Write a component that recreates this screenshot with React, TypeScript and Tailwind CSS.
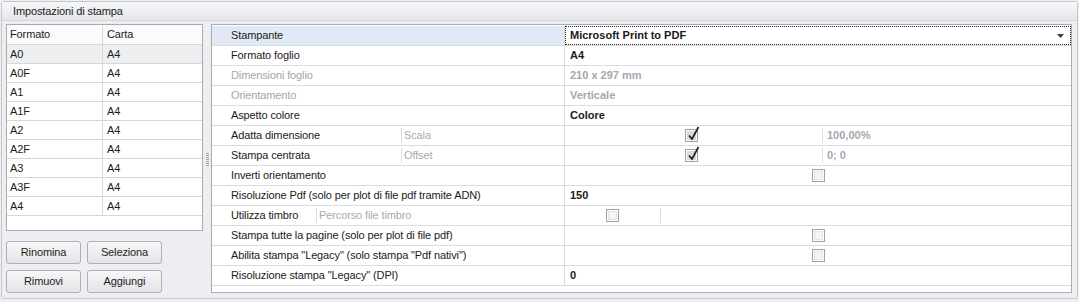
import React from 'react';

type Row = {
  label: string;
  dim?: boolean;
  sub?: string;
  subW?: number;
  value?: string;
  valueDim?: boolean;
  check?: 'none' | 'on' | 'off';
  checkMode?: 'full' | 'half' | 'small';
  extra?: string;
  selected?: boolean;
  combo?: boolean;
};

const rows: Row[] = [
  { label: 'Stampante', value: 'Microsoft Print to PDF', selected: true, combo: true },
  { label: 'Formato foglio', value: 'A4' },
  { label: 'Dimensioni foglio', dim: true, value: '210 x 297 mm', valueDim: true },
  { label: 'Orientamento', dim: true, value: 'Verticale', valueDim: true },
  { label: 'Aspetto colore', value: 'Colore' },
  { label: 'Adatta dimensione', sub: 'Scala', subW: 167, check: 'on', checkMode: 'half', extra: '100,00%' },
  { label: 'Stampa centrata', sub: 'Offset', subW: 167, check: 'on', checkMode: 'half', extra: '0; 0' },
  { label: 'Inverti orientamento', check: 'off', checkMode: 'full' },
  { label: 'Risoluzione Pdf (solo per plot di file pdf tramite ADN)', value: '150' },
  { label: 'Utilizza timbro', sub: 'Percorso file timbro', subW: 82, check: 'off', checkMode: 'small' },
  { label: 'Stampa tutte la pagine (solo per plot di file pdf)', check: 'off', checkMode: 'full' },
  { label: 'Abilita stampa "Legacy" (solo stampa "Pdf nativi")', check: 'off', checkMode: 'full' },
  { label: 'Risoluzione stampa "Legacy" (DPI)', value: '0' },
];

const formats = ['A0', 'A0F', 'A1', 'A1F', 'A2', 'A2F', 'A3', 'A3F', 'A4'];

function CheckBox({ checked }: { checked: boolean }) {
  return (
    <div className="relative w-[13px] h-[13px] border border-[#9ea2a8] bg-[#fdfdfd]">
      <div className={`absolute inset-[1px] ${checked ? 'bg-[#d8dadd]' : 'bg-[#f4f4f4] border border-[#e2e3e5]'}`} />
      {checked && (
        <svg className="absolute left-[1px] -top-[4px]" width="13" height="15" viewBox="0 0 13 15">
          <path d="M2 9.5 L5 13 L11.5 1" fill="none" stroke="#1c1c1c" strokeWidth="1.6" />
        </svg>
      )}
    </div>
  );
}

function Btn({ children }: { children: React.ReactNode }) {
  return (
    <button className="w-[75px] h-[23px] rounded-[3px] border border-[#adb1b7] bg-gradient-to-b from-[#f7f7f8] to-[#e3e4e6] text-[11px] text-[#1e1e1e] leading-none">
      {children}
    </button>
  );
}

function PropRow({ r }: { r: Row }) {
  const labelColor = r.dim ? 'text-[#a3a6aa]' : 'text-[#1b1b1b]';
  return (
    <div className={`flex h-[20px] border-b border-[#d9dce1] ${r.selected ? 'bg-[#e1e9f7]' : ''}`}>
      <div className="flex w-[353px] pl-[19px] border-r border-[#d9dce1]">
        {r.sub ? (
          <>
            <div className={`flex items-center ${labelColor}`} style={{ width: r.subW }}>
              {r.label}
            </div>
            <div className="flex-1 flex items-center pl-[3px] text-[#a8abaf]">
              <div className="h-[15px] border-l border-[#d9dce1] mr-[2px]" />
              {r.sub}
            </div>
          </>
        ) : (
          <div className={`flex items-center ${labelColor}`}>{r.label}</div>
        )}
      </div>
      <div className="flex-1 flex bg-white tracking-normal">
        {r.combo && (
          <div className="flex-1 flex items-center justify-between border border-dotted border-[#222] pl-[4px] pr-[6px] font-bold text-[#1b1b1b]">
            <span>{r.value}</span>
            <svg width="7" height="4" viewBox="0 0 7 4"><path d="M0 0 H7 L3.5 4 Z" fill="#3a3d44" /></svg>
          </div>
        )}
        {!r.combo && r.value !== undefined && (
          <div className={`flex items-center pl-[5px] font-bold ${r.valueDim ? 'text-[#a3a8b0]' : 'text-[#1b1b1b]'}`}>{r.value}</div>
        )}
        {r.check && r.checkMode === 'full' && (
          <div className="flex-1 flex items-center justify-center">
            <CheckBox checked={r.check === 'on'} />
          </div>
        )}
        {r.check && r.checkMode === 'half' && (
          <>
            <div className="w-[253px] flex items-center justify-center">
              <CheckBox checked={r.check === 'on'} />
            </div>
            <div className="flex-1 flex items-center pl-[4px] font-bold text-[#a3a8b0]">
              <div className="h-[15px] border-l border-[#d9dce1] mr-[4px]" />
              {r.extra}
            </div>
          </>
        )}
        {r.check && r.checkMode === 'small' && (
          <>
            <div className="w-[95px] flex items-center justify-center">
              <CheckBox checked={r.check === 'on'} />
            </div>
            <div className="flex-1 flex items-center">
              <div className="h-[15px] border-l border-[#d9dce1]" />
            </div>
          </>
        )}
      </div>
    </div>
  );
}

export default function App() {
  return (
    <div
      className="w-[1079px] h-[302px] bg-[#eceef1] pt-[1px] pl-[1px] text-[11px] text-[#1b1b1b] tracking-[-0.12px]"
      style={{ fontFamily: '"Liberation Sans", Arial, sans-serif' }}
    >
      <div className="w-[1077px] h-[298px] border border-[#c4c8cd] rounded-[3px] flex flex-col">
        <div className="h-[19px] bg-gradient-to-b from-[#f6f7f8] to-[#e4e6e9] border-b border-[#d2d5d9] pl-[11px] leading-[18px]">
          Impostazioni di stampa
        </div>
        <div className="flex pl-[4px] pt-[3px]">
          {/* Formats list */}
          <div className="w-[197px] flex flex-col">
            <div className="h-[207px] border border-[#a7acb3] bg-white">
              <div className="flex h-[20px] border-b border-[#d5d7da] bg-[#fbfbfb]">
                <div className="w-[96px] pl-[3px] flex items-center border-r border-[#d5d7da]">Formato</div>
                <div className="flex-1 pl-[4px] flex items-center">Carta</div>
              </div>
              {formats.map((f, i) => (
                <div key={f} className={`flex h-[19px] border-b border-[#d5d7da] ${i === 0 ? 'bg-[#eeeff1]' : ''}`}>
                  <div className="w-[96px] pl-[3px] flex items-center border-r border-[#d5d7da]">{f}</div>
                  <div className="flex-1 pl-[4px] flex items-center">A4</div>
                </div>
              ))}
            </div>
            <div className="flex flex-col gap-[6px] mt-[10px]">
              <div className="flex gap-[6px]">
                <Btn>Rinomina</Btn>
                <Btn>Seleziona</Btn>
              </div>
              <div className="flex gap-[6px]">
                <Btn>Rimuovi</Btn>
                <Btn>Aggiungi</Btn>
              </div>
            </div>
          </div>

          {/* Splitter */}
          <div className="w-[8px] flex items-start justify-center pt-[129px]">
            <div className="flex flex-col gap-[1px]">
              {[0, 1, 2, 3, 4, 5, 6].map((d) => (
                <div key={d} className="w-[3px] h-[1px] bg-[#9ea3aa]" />
              ))}
            </div>
          </div>

          {/* Property grid */}
          <div className="w-[861px] h-[269px] border border-[#a7acb3] bg-white pt-[1px]">
            {rows.map((r) => (
              <PropRow key={r.label} r={r} />
            ))}
          </div>
        </div>
      </div>
    </div>
  );
}
